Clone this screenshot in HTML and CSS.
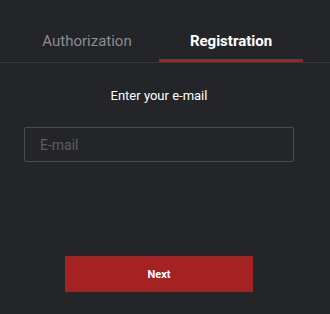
FILE: index.html
```html
<!DOCTYPE html>
<html lang="en">
<head>
<meta charset="utf-8">
<title>Registration</title>
<link rel="stylesheet" href="styles.css">
</head>
<body>
<div class="page">
  <div class="tabs-bar">
    <div class="tabs">
      <div class="tab">Authorization</div>
      <div class="tab active">Registration</div>
    </div>
  </div>
  <div class="form">
    <div class="label">Enter your e-mail</div>
    <div class="field"><span class="placeholder">E-mail</span></div>
    <button class="next" type="button">Next</button>
  </div>
</div>
</body>
</html>
```
FILE: styles.css
```css
html, body {
  margin: 0;
  padding: 0;
  background: #242529;
}
body {
  font-family: Roboto, "Liberation Sans", sans-serif;
  width: 330px;
  height: 314px;
  overflow: hidden;
}
.page {
  display: flex;
  flex-direction: column;
}
.tabs-bar {
  border-bottom: 1px solid #38393d;
  padding-top: 29px;
}
.tabs {
  display: flex;
  margin-left: 15px;
  width: 288px;
}
.tab {
  flex: 1;
  text-align: center;
  font-size: 15px;
  line-height: 24px;
  color: #8b8c90;
  border-bottom: 3px solid transparent;
  box-sizing: border-box;
  height: 33px;
}
.tab.active {
  color: #ffffff;
  font-weight: 700;
  border-bottom-color: #a52222;
}
.form {
  display: flex;
  flex-direction: column;
  align-items: center;
  width: 288px;
  margin-left: 15px;
}
.label {
  margin-top: 25px;
  font-size: 13px;
  line-height: 16px;
  color: #ffffff;
}
.field {
  margin-top: 23px;
  width: 270px;
  height: 35px;
  box-sizing: border-box;
  border: 1px solid #4b4c50;
  border-radius: 2px;
  display: flex;
  align-items: center;
  padding-left: 15px;
}
.placeholder {
  font-size: 14px;
  color: #5b5e64;
}
.next {
  margin-top: 94px;
  width: 188px;
  height: 36px;
  border: none;
  border-radius: 0;
  background: #a52222;
  color: #ffffff;
  font-family: Roboto, "Liberation Sans", sans-serif;
  font-weight: 700;
  font-size: 11px;
  padding: 0;
}
```
